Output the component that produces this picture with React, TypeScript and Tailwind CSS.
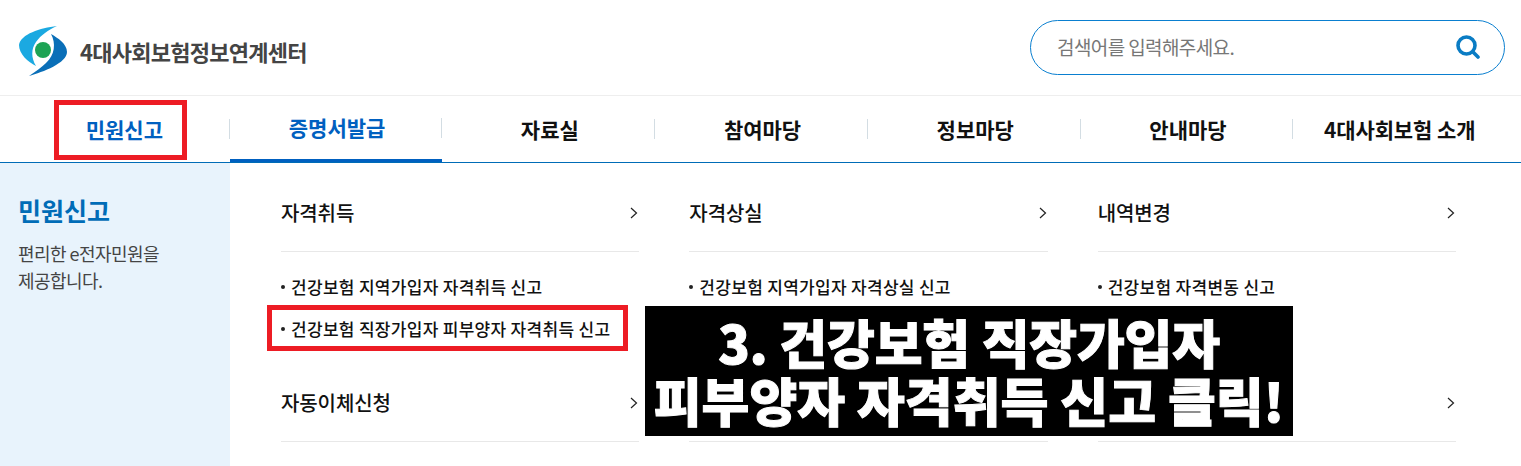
import React from 'react';

const navItems = ['민원신고', '증명서발급', '자료실', '참여마당', '정보마당', '안내마당', '4대사회보험 소개'];

const Chevron: React.FC = () => (
    <svg width="8" height="12" viewBox="0 0 8 12" fill="none" className="shrink-0">
        <path d="M1 1l5.5 5L1 11" stroke="#222" strokeWidth="1.2" />
    </svg>
);

const Section: React.FC<{ title?: string; links?: string[] }> = ({ title, links }) => (
    <div>
        <div className="h-[77px] flex items-center justify-between border-b border-[#e8e8e8] pr-[1px]">
            <span className="text-[20px] font-medium text-[#111] tracking-[-0.1px]">{title}</span>
            <Chevron />
        </div>
        {links && (
            <ul className="pt-[14px] pb-[15px]">
                {links.map((l, i) => (
                    <li key={i} className="h-[42px] flex items-center text-[17px] font-medium text-[#111] tracking-[0.3px]">
                        <span className="w-[4px] h-[4px] rounded-full bg-[#222] mr-[6px] shrink-0" />
                        {l}
                    </li>
                ))}
            </ul>
        )}
    </div>
);

const App: React.FC = () => {
    return (
        <div className="relative h-[466px] w-[1521px] overflow-hidden bg-white font-['Noto_Sans_CJK_KR',sans-serif]">
            {/* Header */}
            <header className="h-[96px] flex items-center justify-between pl-[18px] pr-[16px] border-b border-[#eeeeee]">
                <div className="flex items-center gap-[12px] mt-[6px]">
                    <svg width="50" height="52" viewBox="0 0 50 52">
                        <path d="M39 1C22 3 3 9 1 20c0 9 9 17 17 21-5-8-5-17 0-24C23 10 30 5 39 1Z" fill="#1ba9e1" />
                        <path d="M33 9c7 4 16 10 16 18 0 11-24 20-38 24 7-5 13-9 17-13 9-8 10-20 5-29Z" fill="#0a6fb8" />
                        <circle cx="25" cy="25" r="8" fill="#1da355" />
                    </svg>
                    <span className="text-[22px] font-bold text-[#444] tracking-[-0.75px] mt-[2px]">4대사회보험정보연계센터</span>
                </div>
                <div className="w-[475px] h-[55px] rounded-full border border-[#0a7fd0] flex items-center justify-between pl-[26px] pr-[24px] mb-[1px]">
                    <span className="text-[19px] text-[#777] tracking-[-0.6px]">검색어를 입력해주세요.</span>
                    <svg width="24" height="24" viewBox="0 0 24 24" fill="none">
                        <circle cx="10.5" cy="10.5" r="8.5" stroke="#0a7cc4" strokeWidth="3.6" />
                        <path d="M17 17l5 5" stroke="#0a7cc4" strokeWidth="3.6" strokeLinecap="round" />
                    </svg>
                </div>
            </header>

            {/* Nav */}
            <nav className="h-[67px] flex pl-[17px] pr-[15px] border-b border-[#006cb7]">
                {navItems.map((item, i) => (
                    <div key={item} className={`flex-1 flex items-center ${i === 1 ? 'border-b-[3px] border-[#0060c0]' : ''}`}>
                        <span className={`flex-1 text-center text-[21px] font-bold pt-[1px] ${i === 6 ? 'pl-0 tracking-[-0.1px]' : 'pl-[3px]'} ${i < 2 ? 'text-[#0060c0]' : 'text-[#111]'}`}>{item}</span>
                        {i < 6 && <span className="w-px h-[20px] bg-[#d3dde3]" />}
                    </div>
                ))}
            </nav>

            {/* Body */}
            <div className="flex h-[303px]">
                <aside className="w-[230px] shrink-0 bg-[#e8f3fc] pl-[18px] pt-[27px]">
                    <h2 className="text-[25px] leading-[40px] font-bold text-[#006cb7]">민원신고</h2>
                    <p className="mt-[10px] text-[18px] leading-[27px] text-[#444] tracking-[-0.55px]">
                        편리한 e전자민원을
                        <br />
                        제공합니다.
                    </p>
                </aside>
                <main className="w-[1226px] pl-[51px] pt-[12px] grid grid-cols-3 gap-x-[50px] content-start">
                    <Section
                        title="자격취득"
                        links={['건강보험 지역가입자 자격취득 신고', '건강보험 직장가입자 피부양자 자격취득 신고']}
                    />
                    <Section title="자격상실" links={['건강보험 지역가입자 자격상실 신고']} />
                    <Section title="내역변경" links={['건강보험 자격변동 신고']} />
                    <Section title="자동이체신청" />
                    <Section />
                    <Section />
                </main>
            </div>

            {/* Annotations */}
            <div className="absolute left-[54px] top-[100px] w-[133px] h-[60px] border-[5px] border-[#ed1c24]" />
            <div className="absolute left-[267px] top-[305px] w-[361px] h-[46px] border-[5px] border-[#ed1c24]" />
            <div className="absolute left-[645px] top-[306px] w-[648px] h-[130px] bg-black flex flex-col items-center justify-center text-white text-[52px] leading-[58px] font-black whitespace-nowrap [-webkit-text-stroke:1px_white]">
                <span className="tracking-[-0.2px]">3. 건강보험 직장가입자</span>
                <span>피부양자 자격취득 신고 클릭!</span>
            </div>
        </div>
    );
};

export default App;
